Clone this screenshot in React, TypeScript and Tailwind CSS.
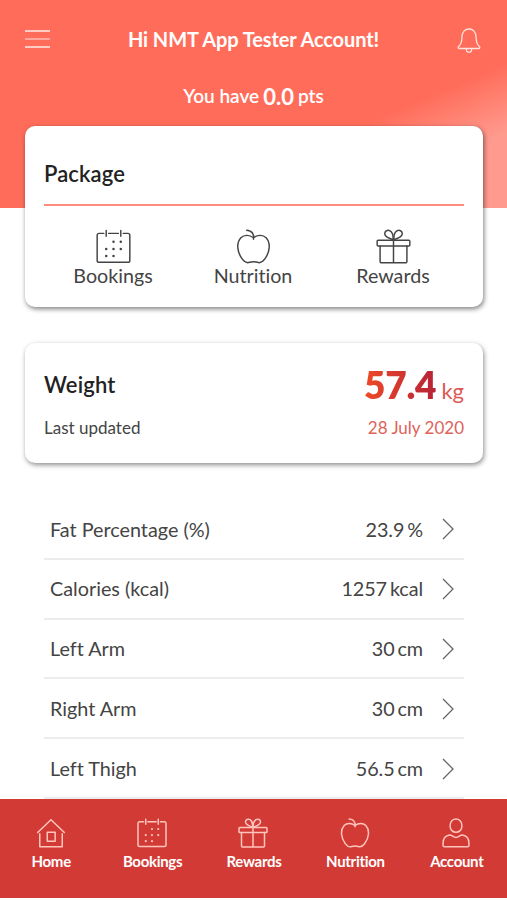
import type { ReactNode } from "react";

type IconProps = { className?: string };

function Svg({ className, children }: { className?: string; children: ReactNode }) {
  return (
    <svg
      viewBox="0 0 36 36"
      fill="none"
      stroke="currentColor"
      strokeLinecap="round"
      strokeLinejoin="round"
      className={className}
    >
      {children}
    </svg>
  );
}

function CalendarIcon({ className }: IconProps) {
  return (
    <Svg className={className}>
      <path d="M8 4.5H3.2a2 2 0 0 0-2 2v25.800a2 2 0 0 0 2 2h29.600a2 2 0 0 0 2-2V6.500a2 2 0 0 0-2-2H28M13 4.500h10" />
      <path d="M10.500 1.500v6M25.500 1.500v6" />
      <path
        strokeWidth="2.600"
        d="M18 13.200h.010M25.500 13.200h.010M10.500 20.500h.010M18 20.500h.010M25.500 20.500h.010M10.500 27.800h.010M18 27.800h.010"
      />
    </Svg>
  );
}

function AppleIcon({ className }: IconProps) {
  return (
    <Svg className={className}>
      <path d="M18 9C14 6 8.500 5.500 5 9C0 14.500 1.200 24 6.500 31C9 34.200 11.500 35.300 14 34.200C17 33.300 19 33.300 22 34.200C24.500 35.300 27 34.200 29.500 31C34.800 24 36 14.500 31 9C27.500 5.500 22 6 18 9Z" />
      <path d="M18 10.500C19 5.500 16.500 1.500 11 1.200" />
    </Svg>
  );
}

function GiftIcon({ className }: IconProps) {
  return (
    <Svg className={className}>
      <path d="M2.200 11.500h31.600a1 1 0 0 1 1 1v4a1 1 0 0 1-1 1H2.200a1 1 0 0 1-1-1v-4a1 1 0 0 1 1-1Z" />
      <path d="M4.200 17.500v15.800a1.500 1.500 0 0 0 1.500 1.500h24.600a1.500 1.500 0 0 0 1.500-1.500V17.500M18 11.500v23.300" />
      <path d="M17.500 11C15.500 10 9.500 9 9 5C8.800 2 12 .5 14.500 2C17.500 4 17.800 8 17.500 11Z" />
      <path d="M18.500 11C20.500 10 26.500 9 27 5C27.200 2 24 .5 21.500 2C18.500 4 18.200 8 18.500 11Z" />
    </Svg>
  );
}

function HomeIcon({ className }: IconProps) {
  return (
    <Svg className={className}>
      <path d="M2 17.500L18 2l16 15.500M4.500 19v15.500h27V19" />
      <path d="M13.500 17h9.500v11h-9.500z" />
    </Svg>
  );
}

function AccountIcon({ className }: IconProps) {
  return (
    <Svg className={className}>
      <rect x="11" y="1.200" width="14" height="16" rx="7" />
      <path d="M18 23.500C15 23.500 13 20.300 10.500 20.500C5 21.500 2.500 25.500 2.500 30v3a1.500 1.500 0 0 0 1.500 1.500h28a1.500 1.500 0 0 0 1.500-1.500v-3C33.500 25.500 31 21.500 25.500 20.500C23 20.300 21 23.500 18 23.500Z" />
    </Svg>
  );
}

function BellIcon({ className }: IconProps) {
  return (
    <svg viewBox="0 0 24 26" fill="none" stroke="currentColor" strokeLinejoin="round" className={className}>
      <path d="M2.200 20.500C1 20.500.9 19 1.800 18.200C4 16.500 4.800 14.500 4.900 9.500C5 4 8 1 12 1s7 3 7.100 8.500c.1 5 .9 7 3.100 8.700c.9.800.8 2.300-.4 2.300Z" />
      <path d="M9.300 20.800a2.700 3.600 0 0 0 5.400 0" />
    </svg>
  );
}

const shortcuts = [
  { label: "Bookings", icon: CalendarIcon },
  { label: "Nutrition", icon: AppleIcon },
  { label: "Rewards", icon: GiftIcon },
];

const measurements = [
  { label: "Fat Percentage (%)", value: "23.9 %" },
  { label: "Calories (kcal)", value: "1257 kcal" },
  { label: "Left Arm", value: "30 cm" },
  { label: "Right Arm", value: "30 cm" },
  { label: "Left Thigh", value: "56.5 cm" },
];

const tabs = [
  { label: "Home", icon: HomeIcon },
  { label: "Bookings", icon: CalendarIcon },
  { label: "Rewards", icon: GiftIcon },
  { label: "Nutrition", icon: AppleIcon },
  { label: "Account", icon: AccountIcon },
];

export default function App() {
  return (
    <div className="flex h-[900px] w-[507px] flex-col overflow-hidden bg-white font-['Lato',sans-serif] text-[#444] [font-variant-ligatures:none]">
      <header className="h-[208px] shrink-0 bg-[#ff6d5a] bg-[linear-gradient(157deg,#ff6d5a_0%,#ff6d5a_66%,#ff9a8e_82%,#ff9a8e_100%)] text-white">
        <div className="flex h-[78px] items-center justify-between pr-[26px] pl-[25px]">
          <button aria-label="Menu" className="flex w-[25px] flex-col gap-[6px]">
            <span className="h-[2px] bg-white/65" />
            <span className="h-[2px] bg-white/40" />
            <span className="h-[2px] bg-white/65" />
          </button>
          <h1 className="text-[20px] font-bold tracking-[-0.1px]">Hi NMT App Tester Account!</h1>
          <button aria-label="Notifications">
            <BellIcon className="mt-1 h-[26px] w-6 stroke-[1.300] text-white/80" />
          </button>
        </div>
        <p className="flex h-9 items-center justify-center gap-1 text-[19px] font-semibold">
          You have <span className="text-[22px] font-bold">0.0</span> pts
        </p>
      </header>

      <main className="-mt-[82px] min-h-0 flex-1 pr-6 pl-[25px]">
        <section className="h-[181px] rounded-[10px] bg-white px-[19px] shadow-[1px_2px_5px_rgba(0,0,0,0.5)]">
          <h2 className="flex h-[78px] items-end pb-4 text-[22px] leading-7 font-semibold tracking-[0.1px] text-[#222]">
            Package
          </h2>
          <div className="h-[2px] bg-[#ff8d7f]" />
          <div className="-ml-px grid grid-cols-3 pt-[23px] pr-px">
            {shortcuts.map(({ label, icon: Icon }) => (
              <button key={label} className="flex flex-col items-center">
                <Icon className="size-[35px] stroke-[1.5]" />
                <span className="text-[19.700px] leading-6">{label}</span>
              </button>
            ))}
          </div>
        </section>

        <section className="mt-9 flex h-[120px] justify-between rounded-[10px] bg-white px-[19px] shadow-[1px_2px_5px_rgba(0,0,0,0.45)]">
          <div className="pt-7">
            <h2 className="text-[22px] leading-7 font-semibold tracking-[0.15px] text-[#222]">Weight</h2>
            <p className="mt-[17px] text-[17px] leading-6">Last updated</p>
          </div>
          <div className="pt-[18px] text-right">
            <p className="flex h-12 items-baseline justify-end leading-[48px]">
              <span className="bg-linear-to-r from-[#ee4a25] to-[#b62335] bg-clip-text text-[37px] font-extrabold tracking-[-0.2px] text-transparent">
                57.4
              </span>
              <span className="ml-[5px] text-[22px] text-[#dc5a55]">kg</span>
            </p>
            <p className="mt-[7px] text-[17px] leading-6 text-[#df6259]">28 July 2020</p>
          </div>
        </section>

        <ul className="mx-[19px] mt-[37px]">
          {measurements.map(({ label, value }) => (
            <li
              key={label}
              className="flex h-[59.800px] items-center border-b-2 border-[#ececec] pt-px pr-[10px] pl-[6px] text-[19.800px]"
            >
              <span className="flex-1">{label}</span>
              <span className="tracking-[-0.1px] [word-spacing:-2px]">{value}</span>
              <svg
                viewBox="0 0 12 22"
                fill="none"
                stroke="currentColor"
                className="ml-[19px] h-[22px] w-3 stroke-[1.300] text-[#666]"
              >
                <path d="M1 1l10 10L1 21" />
              </svg>
            </li>
          ))}
        </ul>
      </main>

      <nav className="mb-[2px] grid h-[99px] shrink-0 grid-cols-5 bg-[#d23b35] pt-[19px] text-white">
        {tabs.map(({ label, icon: Icon }) => (
          <button key={label} className="flex flex-col items-center">
            <Icon className="size-[30px] stroke-[1.800] text-[#ffc5bd]" />
            <span className="mt-[3px] ml-px text-[15px] leading-5 font-bold tracking-[-0.3px]">{label}</span>
          </button>
        ))}
      </nav>
    </div>
  );
}
